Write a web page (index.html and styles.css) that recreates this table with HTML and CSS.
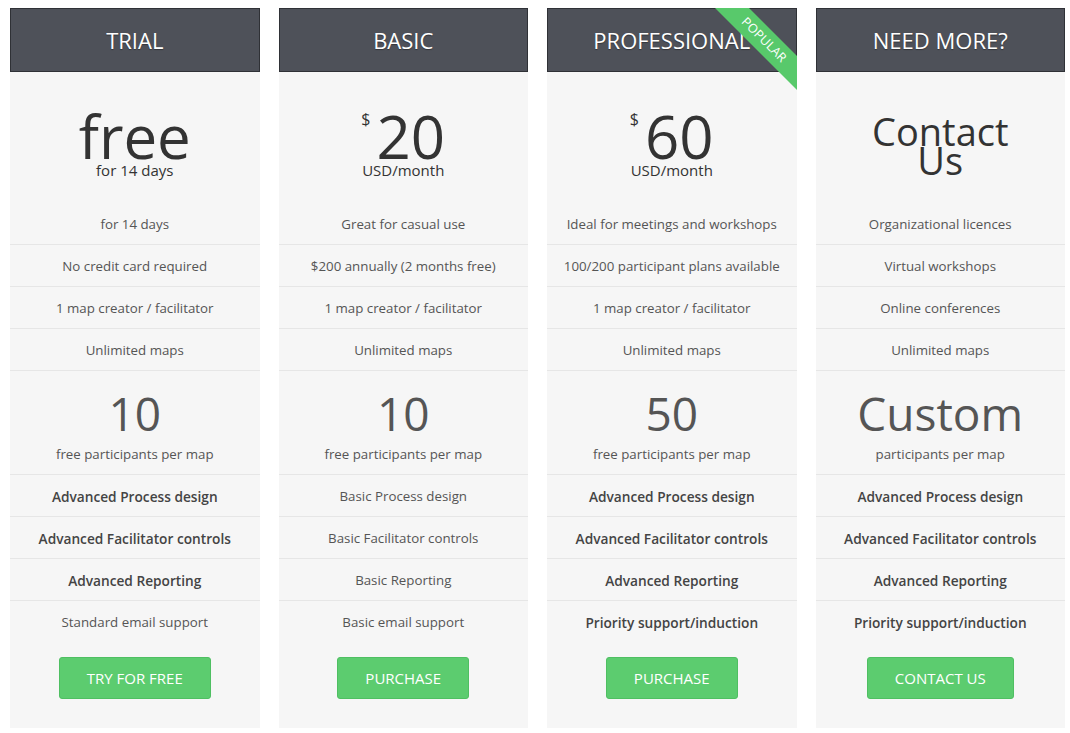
FILE: index.html
```html
<!DOCTYPE html>
<html>
<head>
<meta charset="utf-8">
<link rel="stylesheet" href="styles.css">
</head>
<body>
<div class="plans">
  <div class="plan">
    <div class="plan-head">TRIAL</div>
    <div class="price">
      <div class="amount">free</div>
      <div class="per">for 14 days</div>
    </div>
    <div class="row">for 14 days</div>
    <div class="row">No credit card required</div>
    <div class="row">1 map creator / facilitator</div>
    <div class="row">Unlimited maps</div>
    <div class="parts">
      <div class="parts-num">10</div>
      <div class="parts-label">free participants per map</div>
    </div>
    <div class="row strong">Advanced Process design</div>
    <div class="row strong">Advanced Facilitator controls</div>
    <div class="row strong">Advanced Reporting</div>
    <div class="row last">Standard email support</div>
    <div class="action"><a class="btn">TRY FOR FREE</a></div>
  </div>

  <div class="plan">
    <div class="plan-head">BASIC</div>
    <div class="price">
      <div class="amount"><span class="cur">$</span>20</div>
      <div class="per">USD/month</div>
    </div>
    <div class="row">Great for casual use</div>
    <div class="row">$200 annually (2 months free)</div>
    <div class="row">1 map creator / facilitator</div>
    <div class="row">Unlimited maps</div>
    <div class="parts">
      <div class="parts-num">10</div>
      <div class="parts-label">free participants per map</div>
    </div>
    <div class="row">Basic Process design</div>
    <div class="row">Basic Facilitator controls</div>
    <div class="row">Basic Reporting</div>
    <div class="row last">Basic email support</div>
    <div class="action"><a class="btn">PURCHASE</a></div>
  </div>

  <div class="plan">
    <div class="plan-head">PROFESSIONAL</div>
    <div class="ribbon">POPULAR</div>
    <div class="price">
      <div class="amount"><span class="cur">$</span>60</div>
      <div class="per">USD/month</div>
    </div>
    <div class="row">Ideal for meetings and workshops</div>
    <div class="row">100/200 participant plans available</div>
    <div class="row">1 map creator / facilitator</div>
    <div class="row">Unlimited maps</div>
    <div class="parts">
      <div class="parts-num">50</div>
      <div class="parts-label">free participants per map</div>
    </div>
    <div class="row strong">Advanced Process design</div>
    <div class="row strong">Advanced Facilitator controls</div>
    <div class="row strong">Advanced Reporting</div>
    <div class="row strong last">Priority support/induction</div>
    <div class="action"><a class="btn">PURCHASE</a></div>
  </div>

  <div class="plan">
    <div class="plan-head">NEED MORE?</div>
    <div class="price price-contact">
      <div class="contact">Contact<br>Us</div>
    </div>
    <div class="row">Organizational licences</div>
    <div class="row">Virtual workshops</div>
    <div class="row">Online conferences</div>
    <div class="row">Unlimited maps</div>
    <div class="parts">
      <div class="parts-num">Custom</div>
      <div class="parts-label">participants per map</div>
    </div>
    <div class="row strong">Advanced Process design</div>
    <div class="row strong">Advanced Facilitator controls</div>
    <div class="row strong">Advanced Reporting</div>
    <div class="row strong last">Priority support/induction</div>
    <div class="action"><a class="btn">CONTACT US</a></div>
  </div>
</div>
</body>
</html>
```

FILE: styles.css
```css
html, body {
  margin: 0;
  padding: 0;
  background: #ffffff;
}

body {
  padding: 8px 5px 0 10px;
  font-family: "Open Sans", "Liberation Sans", sans-serif;
  color: #555;
}

.plans {
  display: grid;
  grid-template-columns: repeat(4, 1fr);
  column-gap: 19px;
  width: 1055px;
}

.plan {
  position: relative;
  overflow: hidden;
  background: #f6f6f6;
  display: flex;
  flex-direction: column;
  height: 720px;
}

.plan-head {
  height: 62px;
  background: #4e5159;
  border: 1px solid #2f3136;
  color: #ffffff;
  font-size: 22px;
  line-height: 62px;
  text-align: center;
  text-shadow: 0 1px 1px rgba(0, 0, 0, 0.35);
}

.ribbon {
  position: absolute;
  left: 155px;
  top: 20px;
  width: 124px;
  height: 24px;
  line-height: 24px;
  background: #58c96b;
  color: #fff;
  font-size: 12.5px;
  text-align: center;
  transform: rotate(45deg);
  letter-spacing: 0.2px;
}

.price {
  height: 131px;
  box-sizing: border-box;
  padding-top: 39px;
  text-align: center;
  color: #333;
}

.amount {
  font-size: 60px;
  line-height: 50px;
}

.cur {
  display: inline-block;
  vertical-align: top;
  font-size: 16px;
  line-height: 16px;
  margin-top: 0;
  margin-right: 6px;
}

.per {
  font-size: 15px;
  line-height: 16px;
  margin-top: 1px;
}

.price-contact {
  padding-top: 45px;
}

.contact {
  font-size: 38px;
  line-height: 29px;
}

.row {
  height: 42px;
  box-sizing: border-box;
  padding-top: 1px;
  border-bottom: 1px solid #e6e6e6;
  font-size: 13.3px;
  line-height: 41px;
  text-align: center;
  color: #555;
  white-space: nowrap;
}

.row.strong {
  font-size: 13.7px;
  font-weight: 600;
  color: #444;
}

.row.last {
  border-bottom: none;
}

.parts {
  height: 104px;
  box-sizing: border-box;
  padding-top: 18px;
  border-bottom: 1px solid #e6e6e6;
  text-align: center;
}

.parts-num {
  font-size: 46px;
  line-height: 48px;
  color: #555;
}

.parts-label {
  font-size: 13.3px;
  line-height: 20px;
  margin-top: 7px;
  color: #555;
}

.action {
  display: flex;
  justify-content: center;
  padding-top: 14px;
}

.btn {
  display: block;
  height: 42px;
  box-sizing: border-box;
  padding: 0 27px;
  background: #5ccc6f;
  border: 1px solid #4fbf62;
  border-radius: 3px;
  color: #ffffff;
  font-size: 15px;
  line-height: 40px;
  text-decoration: none;
}
```
